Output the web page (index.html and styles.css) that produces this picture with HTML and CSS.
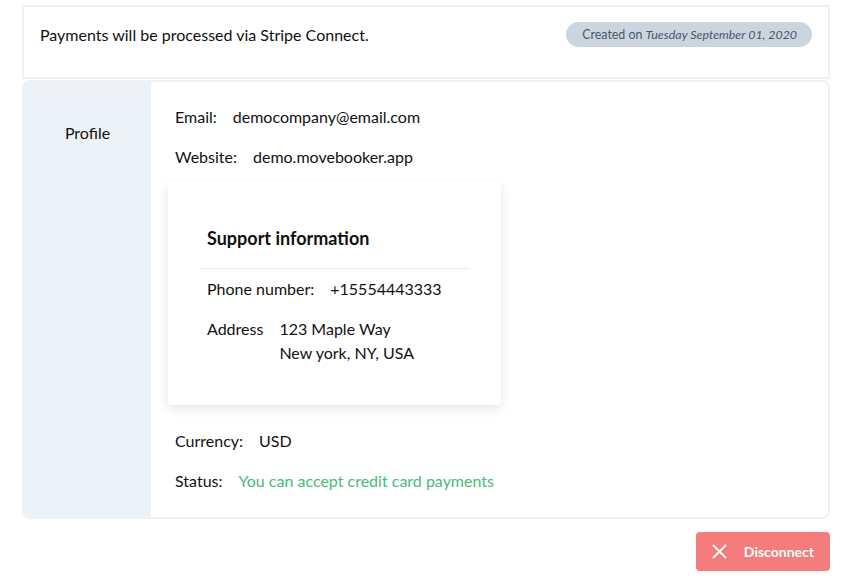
FILE: index.html
```html
<!DOCTYPE html>
<html lang="en">
<head>
  <meta charset="UTF-8">
  <meta name="viewport" content="width=device-width, initial-scale=1.0">
  <title>Stripe Connect</title>
  <link rel="stylesheet" href="styles.css">
</head>
<body>
  <div class="page">
    <div class="notice">
      <span>Payments will be processed via Stripe Connect.</span>
      <span class="badge">Created on <em>Tuesday September 01, 2020</em></span>
    </div>

    <div class="panel">
      <div class="side">Profile</div>
      <div class="content">
        <div class="row"><span>Email:</span><span>democompany@email.com</span></div>
        <div class="row"><span>Website:</span><span>demo.movebooker.app</span></div>

        <div class="support">
          <h3>Support information</h3>
          <div class="row"><span>Phone number:</span><span>+15554443333</span></div>
          <div class="row"><span>Address</span><span>123 Maple Way<br>New york, NY, USA</span></div>
        </div>

        <div class="row"><span>Currency:</span><span>USD</span></div>
        <div class="row"><span>Status:</span><span class="ok">You can accept credit card payments</span></div>
      </div>
    </div>

    <div class="actions">
      <button class="disconnect">
        <svg width="15" height="15" viewBox="0 0 15 15"><path d="M1 1L14 14M14 1L1 14" stroke="#fff" stroke-width="1.8" fill="none"/></svg>
        Disconnect
      </button>
    </div>
  </div>
</body>
</html>
```

FILE: styles.css
```css
body { margin: 0; font-family: Lato, "Open Sans", sans-serif; color: #111; background: #fff; }
.page { padding: 5px 31px 0 22px; }
.notice { display: flex; justify-content: space-between; align-items: flex-start; border: 2px solid #eef2f6; padding: 15px 16px 30px 16px; font-size: 16px; line-height: 25px; }
.badge { background: #cbd5e0; color: #4a5568; border-radius: 13px; padding: 0 15px 0 16px; font-size: 12.4px; line-height: 25px; }
.badge em { font-style: italic; }
.panel { display: flex; margin-top: 1px; border: 2px solid #eef2f6; border-radius: 8px; overflow: hidden; }
.side { width: 127px; background: #edf2f7; text-align: center; font-size: 16px; line-height: 24px; padding-top: 39px; }
.content { flex: 1; padding: 15px 17px 16px 17px; }
.row { display: flex; gap: 16px; padding: 8px 7px; font-size: 16px; line-height: 24px; }
.ok { color: #48bb78; }
.support { width: 269px; margin: 4px 0 16px; padding: 32px; background: #fff; border-radius: 4px; box-shadow: 0 4px 12px rgba(0, 0, 0, 0.1); }
.support h3 { margin: 0; padding: 13px 7px 18px; font-size: 18px; line-height: 24px; font-weight: bold; border-bottom: 1px solid #e2e8f0; }
.actions { display: flex; justify-content: flex-end; margin-top: 13px; }
.disconnect { display: flex; align-items: center; gap: 17px; height: 39px; padding: 0 16px; background: #f47c7c; color: #fff; border: none; border-radius: 4px; font-family: Lato, sans-serif; font-size: 14px; font-weight: bold; cursor: pointer; }
```
